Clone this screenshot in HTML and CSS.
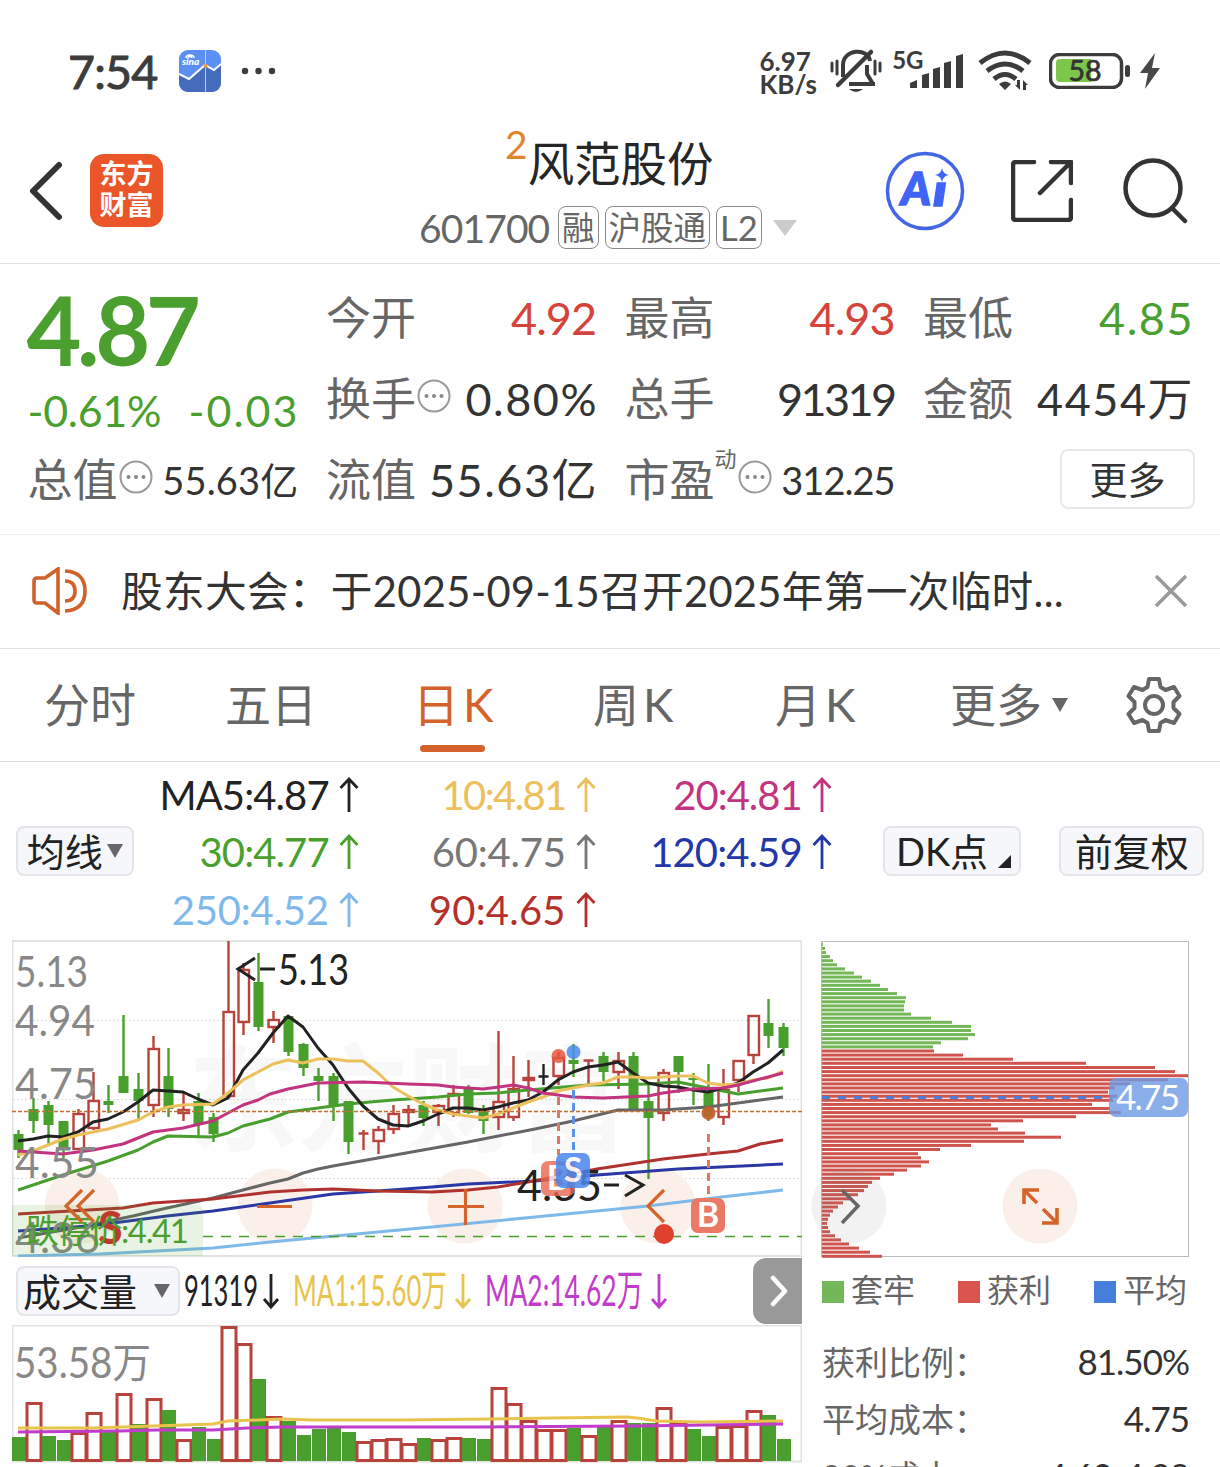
FILE: index.html
```html
<!DOCTYPE html>
<html lang="zh-CN">
<head>
  <meta charset="utf-8">
  <title>风范股份 601700</title>
  <link rel="stylesheet" href="styles.css">
</head>
<body>
  <svg class="defs">
    <symbol id="up" viewBox="0 0 20 36"><path d="M10 35V2M1.500 11L10 2l8.500 9" /></symbol>
    <symbol id="down" viewBox="0 0 20 36"><path d="M10 1v33M3 26l7 8 7-8" /></symbol>
    <symbol id="dots" viewBox="0 0 34 34"><circle cx="17" cy="17" r="15.500" fill="none" stroke="#999" stroke-width="2"/><circle cx="9.500" cy="17" r="2"/><circle cx="17" cy="17" r="2"/><circle cx="24.500" cy="17" r="2"/></symbol>
  </svg>

  <!-- status bar -->
  <div class="statusbar">
    <span class="clock">7:54</span>
    <svg class="sina" viewBox="0 0 42 42">
      <rect width="42" height="42" rx="9" fill="#5b90f2"/>
      <path d="M0 25l10 5 16-14 9 5 7-5v17a9 9 0 0 1-9 9H9a9 9 0 0 1-9-9z" fill="#456cba"/>
      <path d="M0 24l10 5 16-14 9 5 7-6" fill="none" stroke="#fff" stroke-width="2"/>
      <path d="M26.500 0v42" stroke="#e9c98f" stroke-width="1"/>
      <circle cx="26.500" cy="16" r="2" fill="#e8973a"/>
      <path d="M7 8c0-4 8-4 8 0M9 8c0-2 4-2 4 0" fill="none" stroke="#fff" stroke-width="1.400"/>
      <text x="3" y="15" class="sina-text">sina</text>
    </svg>
    <svg class="more-dots" viewBox="0 0 36 8"><circle cx="4" cy="4" r="3.200"/><circle cx="17.500" cy="4" r="3.200"/><circle cx="31" cy="4" r="3.200"/></svg>
    <div class="speed">6.97<br>KB/s</div>
    <svg class="bell" viewBox="0 0 52 46">
      <g fill="none" stroke="#3c3c3c" stroke-width="4">
        <path d="M13 29V17c0-16 25-18 27-4M37 17v9l6 10H19M21 36h24" stroke-linejoin="round"/>
        <path d="M8 37L41 4" stroke-linecap="round" stroke-width="4.500"/>
        <path d="M2 15v8M7 13v13M45 13v13M50 15v8" stroke-width="3" stroke-linecap="round"/>
      </g>
      <path d="M19 41h14q-7 6-14 0z" fill="#3c3c3c"/>
    </svg>
    <span class="net">5G</span>
    <svg class="signal" viewBox="0 0 54 36"><path d="M0 35v-5l7-3v8zM12 35V22l7-2v15zM23 35V16l7-2v21zM34 35V10l7-2v27zM46 35V3l7-2v34z"/></svg>
    <svg class="wifi" viewBox="0 0 54 42">
      <g fill="none" stroke="#3c3c3c" stroke-width="5">
        <path d="M2 13q25-20 50 0"/><path d="M9 21q18-14 36 0"/><path d="M16 29q11-9 22 0"/>
      </g>
      <path d="M21 34q6-5 12 0l-6 6zM42 30v10l-5-5h2v-5zM45 40V30l5 5h-2v5z" fill="#3c3c3c"/>
    </svg>
    <svg class="battery" viewBox="0 0 82 36">
      <rect x="1.500" y="1.500" width="71" height="33" rx="9" fill="none" stroke="#3c3c3c" stroke-width="3.500"/>
      <path d="M11 6h31v23H11q-4 0-4-4V10q0-4 4-4z" fill="#7dc64c"/>
      <rect x="76" y="12" width="5" height="12" rx="2.500" fill="#3c3c3c"/>
      <text x="36" y="27.500" text-anchor="middle" class="battery-text">58</text>
    </svg>
    <svg class="bolt" viewBox="0 0 20 36"><path d="M15 0L0 20h8L5 36l15-21h-8z" fill="#484848"/></svg>
  </div>

  <!-- header -->
  <header class="header">
    <svg class="back" viewBox="0 0 36 60"><path d="M31 4L5 30l26 26" fill="none" stroke="#333" stroke-width="6" stroke-linecap="round" stroke-linejoin="round"/></svg>
    <div class="logo">东方<br>财富</div>
    <div class="stock">
      <div class="stock-name"><sup>2</sup>风范股份</div>
      <div class="stock-code">
        <span class="code">601700</span><span class="tag">融</span><span class="tag">沪股通</span><span class="tag">L2</span>
        <svg class="caret" viewBox="0 0 24 16"><path d="M0 0h24L12 16z" fill="#ccc"/></svg>
      </div>
    </div>
    <svg class="ai" viewBox="0 0 80 80">
      <circle cx="40" cy="40" r="37.500" fill="none" stroke="#4366e4" stroke-width="3.500"/>
      <text x="16" y="54" class="ai-text" textLength="30" lengthAdjust="spacingAndGlyphs">A</text>
      <text x="48" y="55" class="ai-text ai-i" textLength="14" lengthAdjust="spacingAndGlyphs">ı</text>
      <path d="M57 17q1 6 7 7-6 1-7 7-1-6-7-7 6-1 7-7z" fill="#4164f5"/>
    </svg>
    <svg class="share" viewBox="0 0 62 62">
      <path d="M23 2H5Q2 2 2 5v52q0 3 3 3h52q3 0 3-3V40M40 2h20v21M59 3L29 33" fill="none" stroke="#333" stroke-width="4.500" stroke-linecap="round" stroke-linejoin="round"/>
    </svg>
    <svg class="search" viewBox="0 0 66 66"><circle cx="30" cy="30" r="27.500"/><path d="M49 50l13 13"/></svg>
  </header>

  <!-- quote -->
  <section class="quote">
    <div class="price-box">
      <div class="price">4.87</div>
      <div class="change"><span>-0.61%</span><span class="diff">-0.03</span></div>
    </div>
    <div class="cell"><label>今开</label><b class="red">4.92</b></div>
    <div class="cell"><label>最高</label><b class="red">4.93</b></div>
    <div class="cell"><label>最低</label><b class="green wide">4.85</b></div>
    <div class="cell"><label>换手</label><svg class="dots"><use href="#dots"/></svg><b class="wide">0.80%</b></div>
    <div class="cell"><label>总手</label><b class="narrow">91319</b></div>
    <div class="cell"><label>金额</label><b class="wide">4454万</b></div>
    <div class="cell small"><label>总值</label><svg class="dots"><use href="#dots"/></svg><b class="loose">55.63亿</b></div>
    <div class="cell"><label>流值</label><b class="wide">55.63亿</b></div>
    <div class="cell small"><label>市盈</label><sup>动</sup><svg class="dots"><use href="#dots"/></svg><b>312.25</b></div>
    <div class="cell end"><button class="more">更多</button></div>
  </section>

  <!-- notice -->
  <section class="notice">
    <svg class="horn" viewBox="0 0 56 48"><path d="M2 14q0-3 3-3h8L26 2v44L13 36H5q-3 0-3-3zM33 4q20 1 20 20T33 44M33 14q10 0 10 10T33 34" fill="none" stroke="#cf622b" stroke-width="3.600"/></svg>
    <p><span class="notice-type">股东大会：</span>于2025-09-15召开2025年第一次临时...</p>
    <svg class="close" viewBox="0 0 32 32"><path d="M1 1l30 30M31 1L1 31"/></svg>
  </section>

  <!-- tabs -->
  <nav class="tabs">
    <a>分时</a>
    <a>五日</a>
    <a class="k active">日K</a>
    <a class="k">周K</a>
    <a class="k">月K</a>
    <a>更多<i></i></a>
    <svg class="gear" viewBox="0 0 56 56">
      <path d="M23 2h10l1.500 8 5 3 8.500-3 5.500 9-6 6v6l6 6-5.500 9-8.500-3-5 3L33 54H23l-1.500-8-5-3L8 46 2.500 37l6-6v-6l-6-6L8 10l8.500 3 5-3z"/>
      <circle cx="28" cy="28" r="9"/>
    </svg>
  </nav>

  <!-- moving averages -->
  <section class="ma">
    <button class="btn btn-ma">均线<i></i></button>
    <div class="ma-list">
      <span class="c5">MA5:4.87<svg><use href="#up"/></svg></span>
      <span class="c10">10:4.81<svg><use href="#up"/></svg></span>
      <span class="c20">20:4.81<svg><use href="#up"/></svg></span>
      <span class="c30">30:4.77<svg><use href="#up"/></svg></span>
      <span class="c60">60:4.75<svg><use href="#up"/></svg></span>
      <span class="c120">120:4.59<svg><use href="#up"/></svg></span>
      <span class="c250">250:4.52<svg><use href="#up"/></svg></span>
      <span class="c90">90:4.65<svg><use href="#up"/></svg></span>
    </div>
    <button class="btn btn-dk">DK点<i></i></button>
    <button class="btn btn-fq">前复权</button>
  </section>

  <main class="main">
    <div class="left">
      <svg class="kline" viewBox="12 940 790 317">
        <text class="watermark" x="188" y="1142" textLength="440" lengthAdjust="spacingAndGlyphs">东方财富</text>
        <rect x="12.500" y="941" width="789" height="315" class="frame"/>
        <path d="M13 1020.500h788M13 1099.500h788M13 1178.500h788" class="grid"/>
        <g fill="#fbf0e9"><circle cx="82" cy="1206" r="37.500"/><circle cx="275" cy="1206" r="37.500"/><circle cx="465" cy="1206" r="37.500"/><circle cx="658" cy="1206" r="37.500"/></g>
        <g id="candles"></g>
        <g id="lines"></g>
        <path d="M12 1111.500h790" class="last-price"/>
        <g class="axis">
          <text x="15" y="987" textLength="73" lengthAdjust="spacingAndGlyphs">5.13</text>
          <text x="15" y="1036" textLength="80" lengthAdjust="spacingAndGlyphs">4.94</text>
          <text x="15" y="1099" textLength="82" lengthAdjust="spacingAndGlyphs">4.75</text>
          <text x="15" y="1178" textLength="84" lengthAdjust="spacingAndGlyphs">4.55</text>
          <text x="15" y="1253" textLength="85" lengthAdjust="spacingAndGlyphs">4.36</text>
        </g>
        <path d="M203 1236.500H802" class="limit-line"/>
        <path d="M12 1205h185q6 0 6 6v45H12z" fill="#4a9f2e" opacity=".13"/>
        <text x="98" y="1244" class="s-mark">S</text>
        <text x="26" y="1243" class="limit-text" textLength="163">跌停价:4.41</text>
        <path d="M255 958l-17 11 17 11M260 969h15" class="pointer"/>
        <text x="278" y="985" class="peak" textLength="71" lengthAdjust="spacingAndGlyphs">5.13</text>
        <text x="517" y="1201" class="peak" textLength="85" lengthAdjust="spacingAndGlyphs">4.35</text>
        <path d="M604 1185h15M625 1175l18 10-18 11" class="pointer"/>
        <g class="tools"><path d="M82 1190l-16 16 16 16M94 1190l-16 16 16 16M257 1206.500h35M448 1206.500h36M465.500 1189v36M664 1190l-16 16 16 16"/></g>
        <circle cx="664" cy="1234" r="10" fill="#e0412e"/>
        <g fill="none" stroke-width="3" stroke-dasharray="8 5">
          <path d="M558.500 1097v58M708.500 1134v62" stroke="#dd7866"/><path d="M573.500 1090v61" stroke="#5d93e6"/>
        </g>
        <circle cx="558.500" cy="1056" r="7" fill="#e8563e" opacity=".85"/>
        <circle cx="573.500" cy="1052" r="7" fill="#4a8bef" opacity=".85"/>
        <circle cx="708.500" cy="1113" r="7" fill="#c2602c" opacity=".9"/>
        <g class="badges">
          <g opacity=".8"><rect x="541" y="1161" width="34" height="35" rx="7" fill="#e9674f"/><text x="558" y="1190">B</text></g>
          <g opacity=".85"><rect x="556" y="1153" width="34" height="35" rx="7" fill="#4a86ee"/><text x="573" y="1182">S</text></g>
          <rect x="691" y="1198" width="34" height="35" rx="7" fill="#ea7965"/><text x="708" y="1227">B</text>
        </g>
      </svg>
      <div class="vol-head">
        <button class="btn btn-vol">成交量<i></i></button>
        <svg class="vol-text" viewBox="184 1262 500 60">
          <text x="184" y="1307" fill="#222" textLength="74" lengthAdjust="spacingAndGlyphs">91319</text>
          <text x="293" y="1307" fill="#e9c44d" textLength="154" lengthAdjust="spacingAndGlyphs">MA1:15.60万</text>
          <text x="485" y="1307" fill="#c23ccb" textLength="158" lengthAdjust="spacingAndGlyphs">MA2:14.62万</text>
          <use href="#down" x="261" y="1273" width="20" height="38" color="#222"/>
          <use href="#down" x="453" y="1273" width="20" height="38" color="#e9c44d"/>
          <use href="#down" x="649" y="1273" width="20" height="38" color="#c23ccb"/>
        </svg>
        <div class="next"><svg viewBox="0 0 18 32"><path d="M3 3l12 13L3 29"/></svg></div>
      </div>
      <svg class="volume" viewBox="12 1325 790 138">
        <rect x="12.500" y="1325.500" width="789" height="136" class="frame"/>
        <text x="14" y="1378" class="axis" textLength="137" lengthAdjust="spacingAndGlyphs">53.58万</text>
        <g id="volumes"></g>
      </svg>
    </div>

    <aside class="right">
      <svg class="chips" viewBox="821 940 368 317">
        <rect x="821.500" y="941.500" width="367" height="315" fill="none" stroke="#bbb"/>
        <g id="chips"></g>
        <path d="M822 1097.500h290" stroke="#4a7fda" stroke-width="3" stroke-dasharray="8 8"/>
        <rect x="1109" y="1078" width="79" height="39" rx="7" fill="#6d9ae3" opacity=".8"/>
        <text x="1116" y="1110" class="avg" textLength="64">4.75</text>
        <circle cx="849" cy="1206" r="37.500" fill="#888" opacity=".11"/>
        <path d="M842 1190l16 16-16 17" fill="none" stroke="#666" stroke-width="3.500"/>
        <circle cx="1040" cy="1206" r="37.500" fill="#fbf0e9"/>
        <path d="M1024 1204v-14h15M1024 1190l13 13M1057 1208v15h-15M1057 1223l-14-14" fill="none" stroke="#d4642a" stroke-width="3.600"/>
      </svg>
      <div class="legend">
        <span><i class="bg-green"></i>套牢</span>
        <span><i class="bg-red"></i>获利</span>
        <span><i class="bg-blue"></i>平均</span>
      </div>
      <div class="row"><label>获利比例：</label><b>81.50%</b></div>
      <div class="row"><label>平均成本：</label><b>4.75</b></div>
      <div class="row"><label>90%成本：</label><b>4.60-4.98</b></div>
    </aside>
  </main>
  <script src="chart.js"></script>
</body>
</html>
```
FILE: styles.css
```css
* {
  margin: 0;
  padding: 0;
  box-sizing: border-box;
}

body {
  width: 1220px;
  height: 1467px;
  overflow: hidden;
  background: #fff;
  color: #333;
  font-family: Lato, "Noto Sans CJK SC", sans-serif;
  font-weight: 400;
}

svg {
  display: block;
  flex: none;
}

b {
  font-weight: 400;
}

button {
  font-family: inherit;
}

.defs {
  width: 0;
  height: 0;
  position: absolute;
}

.defs symbol path {
  fill: none;
  stroke: currentColor;
  stroke-width: 2.8;
}

.red {
  color: #d5433a;
}

.green {
  color: #4a9f2e;
}

/* status bar */
.statusbar {
  height: 114px;
  padding: 28px 60px 0 68px;
  display: flex;
  align-items: center;
}

.clock {
  width: 112px;
  font-size: 46.500px;
  letter-spacing: -0.800px;
  color: #3c3c3c;
  -webkit-text-stroke: 1px #3c3c3c;
}

.sina {
  width: 42px;
  height: 42px;
}

.sina-text {
  font: italic 900 10px Lato;
  fill: #fff;
}

.more-dots {
  width: 36px;
  height: 8px;
  margin-left: 20px;
  fill: #3c3c3c;
}

.speed {
  width: 62px;
  margin-left: 482px;
  margin-top: 4px;
  font-size: 26px;
  line-height: 23px;
  font-weight: 700;
  color: #3c3c3c;
  white-space: nowrap;
}

.bell {
  width: 52px;
  height: 46px;
  margin-left: 9px;
}

.net {
  align-self: flex-start;
  width: 34px;
  margin: 18px 0 0 10px;
  font-size: 24px;
  line-height: 28px;
  font-weight: 700;
  color: #3c3c3c;
}

.signal {
  width: 54px;
  height: 36px;
  margin-left: -16px;
  fill: #3c3c3c;
}

.wifi {
  width: 54px;
  height: 42px;
  margin-left: 14px;
}

.battery {
  width: 82px;
  height: 36px;
  margin-left: 17px;
}

.battery-text {
  font: 400 28.500px Lato;
  fill: #333;
  stroke: #333;
  stroke-width: 0.7;
}

.bolt {
  width: 20px;
  height: 36px;
  margin-left: 9px;
}

/* header */
.header {
  height: 150px;
  border-bottom: 1px solid #ddd;
  display: flex;
  align-items: center;
  padding: 4px 30px 0 28px;
}

.back {
  width: 36px;
  height: 60px;
}

.logo {
  width: 73px;
  height: 73px;
  margin-left: 26px;
  padding-top: 4px;
  border-radius: 14px;
  background: #ea5529;
  color: #fff;
  text-align: center;
  font-size: 27px;
  line-height: 31px;
  font-weight: 700;
}

.stock {
  flex: none;
  width: 378px;
  margin-left: 256px;
  height: 146px;
}

.stock-name {
  height: 72px;
  padding-left: 86px;
  padding-top: 12px;
  font-size: 46.500px;
  line-height: 66px;
  color: #262626;
  display: flex;
}

.stock-name sup {
  font-size: 39px;
  line-height: 29px;
  color: #e0852f;
}

.stock-code {
  display: flex;
  align-items: center;
  height: 44px;
  margin-top: 16px;
  color: #666;
}

.code {
  flex: none;
  width: 139px;
  font-size: 39px;
  letter-spacing: -0.900px;
}

.tag {
  flex: none;
  height: 43px;
  margin-right: 6px;
  padding: 0 3px;
  border: 1.500px solid #8a8a8a;
  border-radius: 8px;
  font-size: 32.500px;
  line-height: 41px;
  white-space: nowrap;
}

.tag:nth-of-type(4) {
  font-size: 34.500px;
}

.caret {
  width: 24px;
  height: 16px;
  margin-left: 5px;
}

.ai {
  width: 80px;
  height: 80px;
  margin-left: 88px;
}

.ai-text {
  font: italic 900 45px Lato;
  fill: #4164f5;
  stroke: #4164f5;
  stroke-width: 1.5;
}

.ai-i {
  font-size: 43px;
}

.share {
  width: 62px;
  height: 62px;
  margin-left: 46px;
}

.search {
  width: 66px;
  height: 66px;
  margin-left: 50px;
  fill: none;
  stroke: #333;
  stroke-width: 4.500;
  stroke-linecap: round;
}

/* quote */
.quote {
  height: 271px;
  padding: 13px 28px 0 27.500px;
  border-bottom: 1px solid #eee;
  display: grid;
  grid-template-columns: 270px 270px 270px 269px;
  grid-template-rows: 81px 81px 81px;
  column-gap: 28.500px;
}

.price-box {
  grid-row: span 2;
  color: #4a9f2e;
}

.price {
  height: 106px;
  margin-left: -1px;
  font-size: 95px;
  line-height: 104px;
  font-weight: 700;
  letter-spacing: -4.500px;
}

.change {
  display: flex;
  justify-content: space-between;
  font-size: 43px;
  line-height: 56px;
  letter-spacing: -0.300px;
}

.change .diff {
  margin-right: -2px;
  letter-spacing: 2px;
}

.cell {
  display: flex;
  align-items: center;
  font-size: 45px;
  line-height: 60px;
  white-space: nowrap;
}

.cell label {
  color: #666;
}

.cell b {
  margin-left: auto;
  letter-spacing: -1px;
}

.cell b.wide {
  margin-right: -2px;
  letter-spacing: 1.500px;
}

.cell b.narrow {
  letter-spacing: -2.600px;
  margin-right: 0;
}

.cell b.loose {
  letter-spacing: 0.200px;
  margin-right: -1px;
}

.cell.small b {
  font-size: 38px;
}

.cell sup {
  align-self: flex-start;
  font-size: 22px;
  line-height: 30px;
  margin-top: 5px;
  color: #666;
}

.dots {
  width: 34px;
  height: 34px;
  margin: -5px 0 0 1px;
  fill: #888;
}

.end {
  justify-content: flex-end;
}

.more {
  width: 135px;
  height: 60px;
  margin: -2px -3px 0 0;
  border: 2px solid #e8e8e8;
  border-radius: 8px;
  background: #fff;
  color: #333;
  font-size: 38px;
  line-height: 50px;
}

/* notice */
.notice {
  height: 114px;
  border-bottom: 1px solid #ddd;
  display: flex;
  align-items: center;
  padding: 0 33px 2px 32px;
}

.horn {
  width: 56px;
  height: 48px;
}

.notice p {
  width: 970px;
  margin-left: 33px;
  font-size: 41.700px;
  letter-spacing: 0.280px;
  line-height: 58px;
  margin-top: 0;
  white-space: nowrap;
}

.close {
  width: 32px;
  height: 32px;
  margin-left: auto;
  stroke: #999;
  stroke-width: 3.500;
}

/* tabs */
.tabs {
  height: 113px;
  border-bottom: 1px solid #ddd;
  display: grid;
  grid-template-columns: 181px 191px 177px 182px 175px 176px 56px;
  align-items: center;
  padding-left: 44px;
  font-size: 46px;
  color: #666;
}

.tabs a {
  height: 112px;
  line-height: 112px;
}

.tabs .k {
  letter-spacing: 4px;
}

.tabs .active {
  color: #d4622a;
  position: relative;
  left: -3px;
}

.tabs .active::after {
  content: "";
  position: absolute;
  left: 7px;
  bottom: 9px;
  width: 65px;
  height: 7px;
  border-radius: 4px;
  background: #d4622a;
}

.tabs i,
.btn i {
  display: inline-block;
  border: 8px solid transparent;
  border-top: 14px solid #666;
  border-bottom: 0;
  margin-left: 10px;
  vertical-align: 10px;
}

.gear {
  width: 56px;
  height: 56px;
  fill: none;
  stroke: #666;
  stroke-width: 4;
  stroke-linejoin: round;
}

/* moving averages */
.ma {
  height: 178px;
  display: flex;
  padding: 4px 16px 0;
  align-items: flex-start;
}

.btn {
  height: 50px;
  border: 2px solid #e3e5e9;
  border-radius: 8px;
  background: #f6f7fa;
  color: #222;
  font-size: 38px;
  line-height: 42px;
  white-space: nowrap;
}

.btn i {
  vertical-align: 8px;
}

.ma .btn {
  margin-top: 60px;
}

.btn-ma {
  width: 118px;
}

.btn-ma i {
  margin-left: 4px;
}

.ma-list {
  display: grid;
  grid-template-columns: 225px 237px 236px;
  grid-auto-rows: 57.500px;
  font-size: 40px;
  letter-spacing: -0.200px;
}

.ma-list span {
  display: flex;
  align-items: center;
  justify-content: flex-end;
}

.ma-list svg {
  width: 20px;
  height: 36px;
  margin-left: 10px;
}

.c5 { color: #222; letter-spacing: -0.900px; }
.c10 { color: #ecc05a; letter-spacing: -1.600px; }
.c20 { color: #c2347f; letter-spacing: -1px; }
.c30 { color: #4a9f2e; letter-spacing: -0.900px; }
.c60 { color: #777; }
.c120 { color: #2337a8; letter-spacing: -0.900px; }
.c250 { color: #7fb9ea; }
.c90 { color: #b5302c; letter-spacing: 0.200px; }

.btn-dk {
  width: 139px;
  margin-left: 51px;
  padding-left: 3px;
}

.btn-dk i {
  border: 0;
  border-left: 13px solid transparent;
  border-bottom: 13px solid #222;
  vertical-align: -2px;
}

.btn-fq {
  width: 145px;
  margin-left: 38px;
}

/* charts */
.main {
  display: flex;
  padding-left: 12px;
}

.left {
  width: 790px;
}

.kline {
  width: 790px;
  height: 317px;
}

.frame {
  fill: none;
  stroke: #e2e2e2;
  stroke-width: 2;
}

.grid {
  stroke: #ddd;
  stroke-dasharray: 2 2;
}

.watermark {
  font: 700 116px "Noto Sans CJK SC";
  fill: #f8f8f8;
}

.axis {
  font-size: 42px;
  fill: #888;
}

.last-price {
  stroke: #c46f33;
  stroke-width: 1.500;
  stroke-dasharray: 4 2;
}

.limit-line {
  stroke: #4a9f2e;
  stroke-width: 1.500;
  stroke-dasharray: 10 8;
}

.limit-text {
  font-size: 33px;
  fill: #4a9f2e;
}

.s-mark {
  font: 700 45px Lato;
  fill: #c0392b;
}

.peak {
  font-size: 43px;
  fill: #222;
}

.pointer {
  fill: none;
  stroke: #222;
  stroke-width: 3;
}

.tools path {
  fill: none;
  stroke: #d4642a;
  stroke-width: 3.200;
}

.badges text {
  font: 700 34px Lato;
  fill: #fff;
  text-anchor: middle;
}

.vol-head {
  height: 68px;
  display: flex;
  align-items: center;
}

.btn-vol {
  width: 164px;
  margin-left: 4px;
  padding-right: 5px;
}

.btn-vol i {
  margin-left: 17px;
  margin-right: -2px;
}

.vol-text {
  width: 500px;
  height: 60px;
  margin-left: 4px;
  font-size: 43px;
  overflow: visible;
}

.next {
  width: 49px;
  height: 66px;
  margin-left: auto;
  border-radius: 13px 0 0 13px;
  background: #999;
  display: flex;
  align-items: center;
  padding-left: 17px;
}

.next svg {
  width: 18px;
  height: 32px;
  fill: none;
  stroke: #fff;
  stroke-width: 4.500;
  stroke-linecap: round;
  stroke-linejoin: round;
}

.volume {
  width: 790px;
  height: 138px;
}

.right {
  width: 368px;
  margin-left: 19px;
}

.chips {
  width: 368px;
  height: 317px;
  overflow: visible;
}

.avg {
  font-size: 35px;
  fill: #fff;
}

.legend {
  display: flex;
  justify-content: space-between;
  align-items: center;
  height: 69px;
  padding: 0 2px 0 1px;
  font-size: 32px;
  line-height: 40px;
  color: #666;
}

.legend span {
  display: flex;
  align-items: center;
  margin-top: -3px;
}

.legend i {
  width: 22px;
  height: 22px;
  margin: 3px 7px 0 0;
}

.bg-green { background: #74b757; }
.bg-red { background: #d9544d; }
.bg-blue { background: #467edb; }

.row {
  height: 57px;
  padding-left: 1px;
  display: flex;
  align-items: center;
  justify-content: space-between;
  font-size: 33px;
  white-space: nowrap;
}

.legend + .row {
  margin-top: 6px;
}

.row label {
  color: #666;
}

.row b {
  font-size: 35px;
  letter-spacing: -1px;
}
```
FILE: chart.js
```js
// one candle every 15px: [kind, high, low, bodyTop, bodyBottom, volumeTop]
const candles = [
  ['g', 1130, 1158, 1134, 1150, 1437], ['g', 1098, 1133, 1109, 1121, 1402], ['g', 1101, 1146, 1105, 1125, 1436],
  ['g', 1121, 1158, 1121, 1147, 1440], ['r', 1109, 1150, 1113, 1150, 1432], ['r', 1072, 1130, 1100, 1129, 1412],
  ['g', 1085, 1113, 1101, 1105, 1432], ['g', 1015, 1093, 1076, 1093, 1393], ['g', 1073, 1121, 1089, 1101, 1424],
  ['r', 1036, 1117, 1048, 1106, 1398], ['g', 1048, 1117, 1076, 1109, 1410], ['r', 1093, 1121, 1109, 1114, 1439],
  ['g', 1093, 1137, 1101, 1125, 1427], ['g', 1113, 1142, 1117, 1134, 1439], ['r', 941, 1097, 1011, 1097, 1326],
  ['r', 963, 1035, 969, 1023, 1343], ['g', 953, 1031, 982, 1027, 1379], ['r', 1011, 1043, 1019, 1028, 1416],
  ['g', 1016, 1056, 1016, 1052, 1421], ['g', 1043, 1076, 1044, 1068, 1435], ['g', 1068, 1101, 1076, 1081, 1429],
  ['g', 1073, 1121, 1076, 1105, 1428], ['g', 1101, 1154, 1101, 1142, 1432], ['r', 1130, 1150, 1133, 1134, 1441],
  ['r', 1126, 1154, 1129, 1142, 1439], ['r', 1105, 1134, 1113, 1130, 1438], ['r', 1105, 1126, 1109, 1113, 1443],
  ['g', 1101, 1126, 1105, 1118, 1438], ['r', 1104, 1126, 1105, 1113, 1439], ['r', 1085, 1117, 1093, 1114, 1437],
  ['g', 1085, 1114, 1089, 1113, 1438], ['g', 1105, 1134, 1111, 1121, 1439], ['r', 1031, 1130, 1101, 1118, 1387],
  ['r', 1056, 1121, 1088, 1118, 1403], ['r', 1060, 1097, 1077, 1081, 1420], ['k', 1064, 1085, 1076, 1077, 1429],
  ['r', 1052, 1085, 1057, 1077, 1429], ['g', 1044, 1077, 1060, 1064, 1428], ['r', 1060, 1084, 1060, 1061, 1435],
  ['g', 1052, 1081, 1056, 1072, 1427], ['r', 1052, 1089, 1060, 1073, 1420], ['g', 1052, 1110, 1056, 1110, 1423],
  ['g', 1085, 1179, 1101, 1118, 1423], ['r', 1069, 1121, 1072, 1114, 1407], ['g', 1056, 1093, 1056, 1072, 1421],
  ['g', 1073, 1105, 1078, 1080, 1429], ['g', 1064, 1121, 1091, 1117, 1436], ['r', 1069, 1125, 1089, 1118, 1426],
  ['r', 1060, 1092, 1060, 1081, 1425], ['r', 1015, 1064, 1015, 1056, 1410], ['g', 999, 1048, 1023, 1036, 1415],
  ['g', 1023, 1056, 1027, 1048, 1439]
];
// volume bars drawn hollow although the candle is green
const hollow = [1, 7, 44];

const colors = { g: '#489f2d', r: '#b8433c', k: '#222' };
const x0 = 18.5, step = 15;
let html = '', vol = '';

candles.forEach(([kind, high, low, top, bottom, v], i) => {
  const x = x0 + i * step, c = colors[kind], h = bottom - top;
  if (kind === 'g') {
    html += `<path d="M${x} ${high}V${low}" stroke="${c}" stroke-width="2.4"/>`;
    html += `<rect x="${x - 5}" y="${top}" width="10" height="${h}" fill="${c}"/>`;
  } else if (h < 2) {
    html += `<path d="M${x} ${high}V${low}M${x - 5} ${top + .5}h10" stroke="${c}" stroke-width="2.4"/>`;
  } else {
    html += `<path d="M${x} ${high}V${top}M${x} ${bottom}V${low}" stroke="${c}" stroke-width="2.4"/>`;
    html += `<rect x="${x - 5}" y="${top + 1}" width="10.500" height="${Math.max(h - 2, 2)}" fill="none" stroke="${c}" stroke-width="2.4"/>`;
  }
  if (kind === 'g' && !hollow.includes(i)) {
    vol += `<rect x="${x - 6.5}" y="${v}" width="14" height="${1461 - v}" fill="#489f2d"/>`;
  } else {
    vol += `<rect x="${x + .5 - 7}" y="${v + 1.5}" width="14" height="${1459 - v}" fill="#fff" stroke="#b8433c" stroke-width="3"/>`;
  }
});
document.getElementById('candles').innerHTML = html;

const lines = [
  ['#7fb9ea', '18,1256 100,1254 213,1248 270,1242 432,1227 535,1217 648,1206 697,1200 730,1196 783,1190'],
  ['#666', '18,1238 75,1228 133,1216 167,1208 213,1198 243,1190 270,1183 288,1179 303,1173 318,1169 333,1166 378,1158 423,1150 468,1142 483,1139 535,1129 573,1121 618,1110 663,1110 708,1107 738,1103 783,1097'],
  ['#2b37a5', '18,1231 90,1226 167,1216 213,1211 270,1203 333,1194 378,1191 432,1187 468,1184 535,1181 597,1175 678,1169 783,1164'],
  ['#b0322f', '18,1214 123,1208 153,1203 213,1199 270,1192 303,1190 333,1189 378,1191 432,1192 468,1190 498,1187 528,1182 597,1169 663,1159 708,1154 738,1151 760,1144 783,1140'],
  ['#489f2d', '18,1190 63,1175 108,1161 138,1150 153,1142 168,1136 213,1137 228,1133 243,1126 270,1119 288,1112 318,1108 348,1104 393,1100 438,1097 468,1094 498,1093 528,1090 588,1085 648,1084 678,1082 708,1088 738,1094 783,1088'],
  ['#222', '18,1141 33,1139 48,1136 63,1137 78,1132 93,1122 108,1119 123,1112 138,1102 153,1090 168,1091 183,1092 198,1099 213,1105 228,1098 243,1070 258,1053 273,1033 288,1016 303,1027 318,1048 333,1065 348,1088 363,1106 378,1119 393,1125 408,1126 423,1121 438,1114 453,1108 468,1108 483,1110 498,1107 513,1103 528,1100 543,1092 558,1080 573,1072 588,1067 603,1065 618,1062 633,1073 648,1083 663,1086 678,1087 693,1090 708,1092 723,1088 738,1083 753,1072 768,1063 783,1050'],
  ['#ecc05a', '18,1155 33,1151 48,1145 63,1139 78,1135 108,1129 138,1120 153,1112 168,1107 183,1105 213,1104 228,1093 243,1080 258,1072 273,1064 288,1060 303,1063 318,1059 333,1059 348,1061 363,1061 378,1073 393,1087 408,1096 423,1104 438,1110 453,1114 468,1116 483,1118 498,1114 513,1108 528,1102 543,1097 558,1091 573,1088 588,1085 603,1083 618,1077 633,1077 648,1078 663,1077 678,1076 693,1076 708,1083 723,1085 738,1084 753,1080 768,1078 783,1071'],
  ['#c2347f', '18,1151 33,1152 63,1154 93,1150 123,1144 153,1132 183,1128 213,1121 228,1113 243,1105 258,1100 270,1094 288,1089 318,1083 363,1082 408,1084 438,1085 453,1087 483,1089 513,1085 528,1088 543,1093 573,1097 603,1098 648,1096 663,1093 693,1089 723,1088 738,1085 783,1073']
];
const poly = ([color, points]) => `<polyline points="${points}" fill="none" stroke="${color}" stroke-width="3" stroke-linejoin="round"/>`;
document.getElementById('lines').innerHTML = lines.map(poly).join('');

vol += poly(['#e9c44d', '18,1428 93,1428 153,1426 213,1424 228,1421 258,1420 283,1419 313,1420 400,1420 490,1419 550,1418 627,1417 637,1418 657,1421 700,1422 783,1421']);
vol += poly(['#c23ccb', '18,1432 120,1431 157,1430 213,1430 247,1428 283,1427 400,1427 480,1427 633,1426 783,1424']);
document.getElementById('volumes').innerHTML = vol;

// cost distribution, widths from top price to bottom price
const trapped = [1, 3, 4, 8, 11, 15, 23, 32, 40, 49, 58, 66, 75, 84, 83, 82, 82, 89, 109, 130, 149, 149, 153, 146, 119, 111];
const profit = [112, 141, 191, 264, 333, 353, 366, 346, 308, 293, 286, 295, 291, 270, 288, 299, 254, 201, 169, 176, 203, 239, 202, 149, 118, 96, 99, 107, 99, 85, 72, 58, 50, 46, 42, 36, 28, 21, 16, 11, 8, 6, 5, 6, 8, 13, 19, 27, 37, 48, 60];
document.getElementById('chips').innerHTML = trapped.concat(profit).map((w, i) => {
  const color = i < trapped.length ? '#74b757' : '#cf544e';
  return `<rect x="822" y="${(942.8 + i * 4.105).toFixed(1)}" width="${w}" height="3" fill="${color}"/>`;
}).join('');
```
